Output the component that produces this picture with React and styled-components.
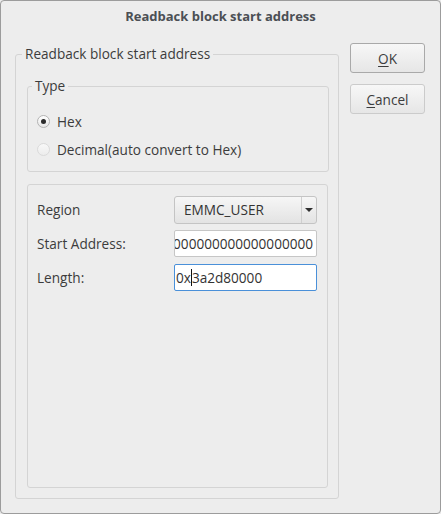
import React from "react";
import styled, { createGlobalStyle } from "styled-components";

const Global = createGlobalStyle`
  html, body {
    margin: 0;
    padding: 0;
    background: #ededed;
  }
  body {
    font-family: "Open Sans", "DejaVu Sans", sans-serif;
    font-size: 13.6px;
    color: #3c3c3c;
  }
`;

const Window = styled.div`
  box-sizing: border-box;
  width: 441px;
  height: 514px;
  border: 1px solid #9c9c9c;
  border-radius: 4px;
  background: #ededed;
  display: flex;
  flex-direction: column;
`;

const TitleBar = styled.div`
  height: 42px;
  box-sizing: border-box;
  padding-top: 6px;
  text-align: center;
  font-weight: bold;
  font-size: 13px;
  line-height: 18px;
  color: #4b4f54;
`;

const Body = styled.div`
  display: flex;
  gap: 11px;
  padding: 0 15px 0 14px;
`;

const Group = styled.fieldset`
  box-sizing: border-box;
  margin: ${p => p.$top || 0}px 0 0 0;
  width: ${p => p.$width}px;
  height: ${p => p.$height}px;
  border: 1px solid #d4d4d4;
  border-radius: 3px;
  padding: ${p => p.$pad};
  min-width: 0;
`;

const Legend = styled.legend`
  padding: 0 3px;
  margin-left: -5px;
  line-height: 18px;
  color: #3c3c3c;
`;

const RadioRow = styled.label`
  display: flex;
  align-items: center;
  height: 28px;
  gap: 7px;
  color: #3c3c3c;
`;

const RadioDot = styled.span`
  box-sizing: border-box;
  width: 13px;
  height: 13px;
  border-radius: 50%;
  border: 1px solid ${p => (p.$on ? "#b4b4b4" : "#dadada")};
  background: ${p =>
    p.$on
      ? "linear-gradient(#ffffff, #e6e6e6)"
      : "linear-gradient(#f8f8f8, #ececec)"};
  display: flex;
  align-items: center;
  justify-content: center;
  &::after {
    content: "";
    display: ${p => (p.$on ? "block" : "none")};
    width: 5px;
    height: 5px;
    border-radius: 50%;
    background: #2b2b2b;
  }
`;

const Panel = styled.div`
  box-sizing: border-box;
  margin-top: 12px;
  height: 304px;
  border: 1px solid #d4d4d4;
  border-radius: 3px;
  padding: 11px 10px 0 9px;
  display: grid;
  grid-template-columns: 1fr 143px;
  grid-auto-rows: 27px;
  row-gap: 7px;
  align-items: center;
  align-content: start;
`;

const FieldLabel = styled.span`
  color: #3c3c3c;
`;

const Combo = styled.div`
  box-sizing: border-box;
  height: 28px;
  border: 1px solid #c4c4c4;
  border-radius: 3px;
  background: linear-gradient(#f6f6f6, #e3e3e3);
  display: flex;
  align-items: center;
`;

const ComboText = styled.span`
  flex: 1;
  padding-left: 9px;
  color: #333;
`;

const ComboArrow = styled.span`
  width: 14px;
  align-self: stretch;
  border-left: 1px solid #cfcfcf;
  display: flex;
  align-items: center;
  justify-content: center;
  &::after {
    content: "";
    border-left: 4px solid transparent;
    border-right: 4px solid transparent;
    border-top: 4px solid #2e2e2e;
  }
`;

const Entry = styled.div`
  box-sizing: border-box;
  height: 27px;
  border: 1px solid ${p => (p.$focus ? "#4a90d9" : "#c6c6c6")};
  border-radius: 2px;
  background: #fff;
  display: flex;
  align-items: center;
  justify-content: ${p => (p.$scrolled ? "flex-end" : "flex-start")};
  overflow: hidden;
  white-space: nowrap;
  padding: 0 3px 0 1px;
  color: #333;
`;

const Caret = styled.span`
  display: inline-block;
  width: 0;
  height: 17px;
  border-left: 1px solid #111;
  vertical-align: middle;
`;

const Side = styled.div`
  display: flex;
  flex-direction: column;
  gap: 11px;
  width: 75px;
`;

const Button = styled.button`
  box-sizing: border-box;
  height: 30px;
  width: 75px;
  border: 1px solid ${p => (p.$default ? "#a9a9a9" : "#cbcbcb")};
  border-radius: 3px;
  background: linear-gradient(#f7f7f7, #e6e6e6);
  font-family: inherit;
  font-size: 13.6px;
  color: #3c3c3c;
  padding: 0;
  u {
    text-decoration: underline;
    text-underline-offset: 2px;
  }
`;

export default function App() {
  return (
    <>
      <Global />
      <Window>
        <TitleBar>Readback block start address</TitleBar>
        <Body>
          <Group $width={325} $height={454} $top={2} $pad="0 10px 10px 11px">
            <Legend>Readback block start address</Legend>
            <Group $width={302} $height={95} $top={14} $pad="12px 0 0 9px">
              <Legend>Type</Legend>
              <RadioRow>
                <RadioDot $on />
                Hex
              </RadioRow>
              <RadioRow>
                <RadioDot />
                Decimal(auto convert to Hex)
              </RadioRow>
            </Group>
            <Panel>
              <FieldLabel>Region</FieldLabel>
              <Combo>
                <ComboText>EMMC_USER</ComboText>
                <ComboArrow />
              </Combo>
              <FieldLabel>Start Address:</FieldLabel>
              <Entry $scrolled>0x00000000000000000000</Entry>
              <FieldLabel>Length:</FieldLabel>
              <Entry $focus>
                0x<Caret />3a2d80000
              </Entry>
            </Panel>
          </Group>
          <Side>
            <Button $default>
              <u>O</u>K
            </Button>
            <Button>
              <u>C</u>ancel
            </Button>
          </Side>
        </Body>
      </Window>
    </>
  );
}
